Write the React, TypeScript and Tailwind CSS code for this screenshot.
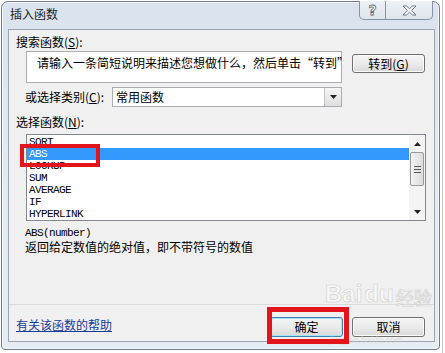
import React from "react";

const cjk = "font-['Noto_Sans_CJK_SC','Noto_Sans',sans-serif]";
const mono = "font-['Liberation_Mono',monospace] text-[11px] tracking-[-0.6px]";

const items = ["SQRT", "ABS", "LOOKUP", "SUM", "AVERAGE", "IF", "HYPERLINK"];

function Triangle({ up }: { up?: boolean }) {
  return (
    <svg width="7" height="4" viewBox="0 0 7 4">
      <path d={up ? "M0 4 L3.5 0 L7 4 Z" : "M0 0 L7 0 L3.5 4 Z"} fill="#222" />
    </svg>
  );
}

function Btn({ label, focus }: { label: React.ReactNode; focus?: boolean }) {
  return (
    <div
      className={
        "w-[73px] h-[20px] rounded-[3px] border flex items-center justify-center text-[12px] leading-none text-black bg-gradient-to-b from-[#f4f4f4] via-[#ebebeb] to-[#d9d9d9] " +
        (focus
          ? "border-[#3c7fb1] shadow-[inset_0_0_0_1px_#a9e3fa]"
          : "border-[#707070] shadow-[inset_0_0_0_1px_#fbfbfb]")
      }
    >
      {label}
    </div>
  );
}

export default function App() {
  return (
    <div className={"relative w-[445px] h-[353px] overflow-hidden bg-white " + cjk}>
      {/* spreadsheet behind */}
      <div className="absolute right-[2px] top-0 h-full w-px bg-[#c9c9c9]" />

      {/* window frame */}
      <div className="ml-[1px] mt-[1px] w-[439px] h-[349px] rounded-t-[7px] rounded-b-[4px] border border-[#6f7c8b] bg-gradient-to-b from-[#dae3ed] via-[#e3eaf2] to-[#e6ecf3] shadow-[inset_0_0_0_1px_#f4f7fa] flex flex-col">
        <div className="relative h-[27px] shrink-0">
          <span className="absolute left-[8px] top-[5px] text-[12px] leading-[14px] text-[#1e1e1e]">
            插入函数
          </span>
          <div className="absolute left-[357px] top-[-1px] flex">
            <div className="w-[27px] h-[19px] border border-[#8592a3] border-t-0 rounded-bl-[5px] bg-gradient-to-b from-[#eef2f6] to-[#dde4ec] flex items-center justify-center text-[14px] leading-none font-['DejaVu_Sans',sans-serif] font-bold text-white [-webkit-text-stroke:0.8px_#5c6878]">
              ?
            </div>
            <div className="w-[47px] h-[19px] border border-l-0 border-[#8592a3] border-t-0 rounded-br-[5px] bg-gradient-to-b from-[#eef2f6] to-[#dde4ec] flex items-center justify-center">
              <svg width="15" height="11" viewBox="0 0 15 11">
                <path
                  d="M1 1 H4.5 L7.5 3.8 L10.5 1 H14 L9.5 5.5 L14 10 H10.5 L7.5 7.2 L4.5 10 H1 L5.5 5.5 Z"
                  fill="#fff"
                  stroke="#5c6878"
                  strokeWidth="0.9"
                />
              </svg>
            </div>
          </div>
        </div>

        {/* client area */}
        <div className="ml-[6px] w-[427px] h-[313px] border border-[#9aa6b4] bg-[#f0f0f0] flex flex-col text-[12px] text-black">
          <div className="ml-[7px] mt-[5px] h-[14px] leading-[14px]">
            搜索函数(<span className="underline">S</span>):
          </div>

          <div className="mt-[2px] flex items-start">
            <div className="ml-[17px] w-[316px] h-[32px] border border-[#abadb3] bg-white pl-[10px] pt-[4px] leading-[14px] whitespace-nowrap">
              请输入一条简短说明来描述您想做什么，然后单击“转到”
            </div>
            <div className="ml-[10px] mt-[3px]">
              <div className="w-[73px] h-[19px] rounded-[3px] border border-[#707070] shadow-[inset_0_0_0_1px_#fbfbfb] bg-gradient-to-b from-[#f4f4f4] via-[#ebebeb] to-[#d9d9d9] flex items-center justify-center leading-none">
                转到(<span className="underline">G</span>)
              </div>
            </div>
          </div>

          <div className="mt-[4px] flex items-center h-[20px]">
            <div className="ml-[16px] w-[87px] leading-[14px]">
              或选择类别(<span className="underline">C</span>):
            </div>
            <div className="w-[230px] h-[20px] border border-[#abadb3] bg-white flex items-center">
              <span className="pl-[3px] flex-1 leading-[14px]">常用函数</span>
              <div className="w-[17px] h-[18px] border-l border-[#c0c4c8] bg-gradient-to-b from-[#f6f6f6] to-[#dedede] flex items-center justify-center">
                <Triangle />
              </div>
            </div>
          </div>

          <div className="ml-[7px] mt-[8px] h-[14px] leading-[14px]">
            选择函数(<span className="underline">N</span>):
          </div>

          <div className="ml-[17px] mt-[5px] w-[400px] h-[87px] border border-[#828790] bg-white flex">
            <div className="w-[382px] pt-px">
              {items.map((it) => (
                <div
                  key={it}
                  className={
                    "h-[12px] leading-[12px] pl-[2px] " +
                    mono +
                    (it === "ABS" ? " bg-[#3399ff] text-white" : " text-black")
                  }
                >
                  {it}
                </div>
              ))}
            </div>
            <div className="w-[16px] bg-[#f4f4f4] flex flex-col items-center">
              <div className="h-[17px] flex items-center justify-center">
                <Triangle up />
              </div>
              <div className="w-[14px] h-[34px] rounded-[2px] border border-[#9a9a9a] bg-gradient-to-r from-[#f3f3f3] to-[#dcdcdc] flex flex-col items-center justify-center gap-[2px]">
                <div className="w-[7px] h-px bg-[#555]" />
                <div className="w-[7px] h-px bg-[#555]" />
                <div className="w-[7px] h-px bg-[#555]" />
              </div>
              <div className="mt-auto h-[17px] flex items-center justify-center">
                <Triangle />
              </div>
            </div>
          </div>

          <div className={"ml-[16px] mt-[6px] h-[12px] leading-[12px] " + mono}>ABS(number)</div>
          <div className="ml-[16px] mt-px h-[14px] leading-[14px]">
            返回给定数值的绝对值，即不带符号的数值
          </div>

          <div className="mt-auto border-t border-[#dcdcdc] h-[37px] flex items-start">
            <a className="ml-[7px] mt-[13px] leading-[14px] text-[#1a3a9c] underline">
              有关该函数的帮助
            </a>
            <div className="ml-auto mr-[9px] mt-[12px] flex gap-[9px]">
              <Btn label="确定" focus />
              <Btn label="取消" />
            </div>
          </div>
        </div>
      </div>

      {/* watermark */}
      <div className="absolute left-[325px] top-[282px] flex items-end text-[24px] leading-none font-['Liberation_Sans',sans-serif] font-bold text-[#ffffff]/60 [-webkit-text-stroke:0.6px_#cfcfcf]">
        Bai<span className="ml-[2px]">du</span>
        <span className={"ml-[2px] text-[18px] font-normal " + cjk}>经验</span>
      </div>
      <div className="absolute left-[330px] top-[336px] text-[9px] leading-none font-['Liberation_Sans',sans-serif] text-[#d4d4d4]/70">
        jingyan.baidu.com
      </div>

      {/* red annotation boxes */}
      <div className="absolute left-[20px] top-[144px] w-[80px] h-[23px] border-4 border-[#e3141b]" />
      <div className="absolute left-[267px] top-[307px] w-[82px] h-[37px] border-[5px] border-[#e3141b]" />
    </div>
  );
}
